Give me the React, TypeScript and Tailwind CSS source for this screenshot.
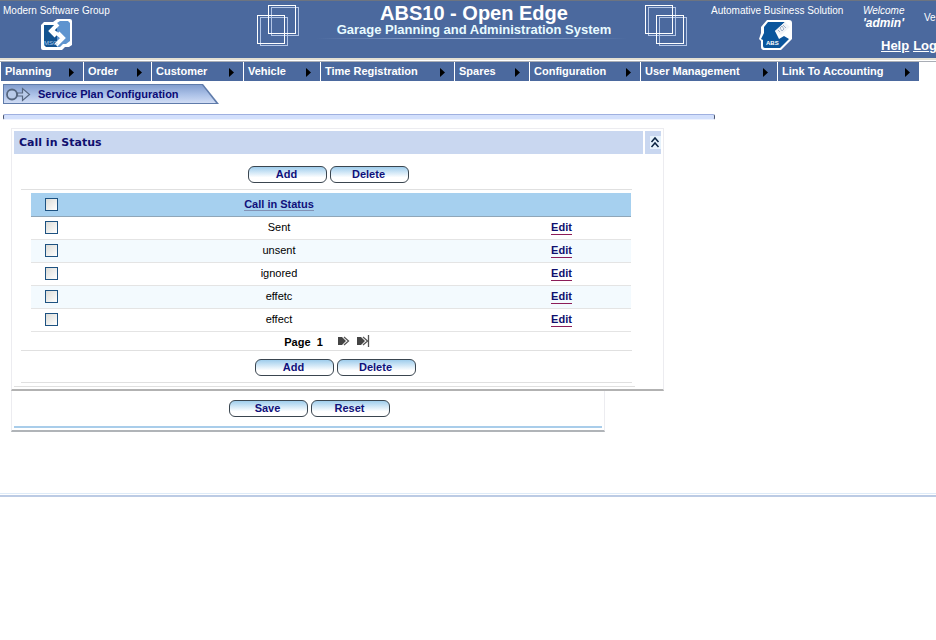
import { useState } from "react";

const menus = [
  { label: "Planning", width: "w-[83px]" },
  { label: "Order", width: "w-[68px]" },
  { label: "Customer", width: "w-[92px]" },
  { label: "Vehicle", width: "w-[77px]" },
  { label: "Time Registration", width: "w-[134px]" },
  { label: "Spares", width: "w-[75px]" },
  { label: "Configuration", width: "w-[111px]" },
  { label: "User Management", width: "w-[137px]" },
  { label: "Link To Accounting", width: "w-[142px]" },
];

const statuses = ["Sent", "unsent", "ignored", "effetc", "effect"];

function Squares({ upperX, lowerX }: { upperX: number; lowerX: number }) {
  return (
    <svg width="42" height="42" viewBox="0 0 42 42" fill="none" aria-hidden="true">
      <g stroke="#b4c6e6">
        <rect x={lowerX + 3} y="12.5" width="27" height="28" />
        <rect x={upperX + 3} y="2.5" width="27" height="28" />
      </g>
      <g stroke="#fff">
        <rect x={lowerX} y="10.5" width="27" height="28" />
        <rect x={upperX} y="0.5" width="27" height="28" />
      </g>
    </svg>
  );
}

function MsgLogo() {
  return (
    <svg width="32" height="32" viewBox="0 0 32 32" aria-label="MSG">
      <path d="M3 3h9l4-3h13q2 0 2 2v24l-3 2h-4l-3 3H2q-2 0-2-2V6z" fill="#fff" />
      <path d="M3 6h13v22H5l-2-2z" fill="#135390" />
      <path d="M16 28V4l3-2h8l2 2v18l-4 3h-3l-3 3z" fill="#5f94cf" />
      <path d="M17 5l-7 7 5 5M15 26l7-7-5-5" fill="none" stroke="#fff" strokeWidth="4" />
      <path d="M11 11l12 9" stroke="#fff" strokeWidth="3" />
      <text x="3" y="26" fontSize="6" fill="#a9cdf0" fontFamily="Liberation Sans, sans-serif">MSG</text>
    </svg>
  );
}

function AbsLogo() {
  return (
    <svg width="34" height="32" viewBox="0 0 34 32" aria-label="ABS">
      <path d="M8 0h22q3 0 3 3v16L22 30H5q-3 0-3-3v-6l-2-2 2-6V7z" fill="#fff" />
      <path d="M9 2h17L16 11l4 8 5-3 5 3-9 9H6q-2 0-2-2v-6l-2-1 3-6V7z" fill="#0b559c" />
      <path d="M16 11l10-9 5 5-9 8z" fill="#f1f3f7" />
      <path d="M19 10l2 2M21 8l2 3 2-2-2-3zM24 5l3 3" fill="none" stroke="#8fa2bd" strokeWidth=".8" />
      <text x="7" y="25" fontSize="6" fontWeight="bold" fill="#fff" fontFamily="Liberation Sans, sans-serif">ABS</text>
    </svg>
  );
}

function PillButton({ label }: { label: string }) {
  return (
    <button
      type="button"
      className="h-[17px] w-[79px] rounded-md border border-[#3a454f] bg-linear-to-b from-[#9fcdec] to-white to-70% pr-[2px] text-center text-[11px] leading-[15px] font-bold text-[#10107a]"
    >
      {label}
    </button>
  );
}

function Tick({ label }: { label: string }) {
  return (
    <input
      type="checkbox"
      aria-label={label}
      className="block size-[13px] appearance-none border border-[#1d5281] bg-linear-to-br from-[#dcdcd7] to-white checked:bg-[#1d5281]"
    />
  );
}

export default function App() {
  const [open, setOpen] = useState(true);
  return (
    <div className="min-h-screen overflow-x-hidden bg-white font-['Liberation_Sans',Arial,sans-serif] text-[11px] text-black">
      <header className="flex h-[58px] border-t border-[#6d7480] bg-[#4b699e] text-white">
        <div className="w-[257px] shrink-0 pt-1 pl-[3px] text-[10px] leading-3">
          <div>Modern Software Group</div>
          <div className="mt-[2px] ml-[38px]"><MsgLogo /></div>
        </div>
        <div className="shrink-0 pt-1"><Squares upperX={11.5} lowerX={0.5} /></div>
        <div className="w-[346px] shrink-0 pt-[2px] text-center font-bold">
          <h1 className="ml-1 text-[20px] leading-5">ABS10 - Open Edge</h1>
          <div className="ml-1 text-[13px] leading-[14px] text-[#e8fbff]">Garage Planning and Administration System</div>
          <div className="mx-auto mt-px h-px w-[310px] bg-linear-to-r from-[#4b699e] via-[#a5b9dd] to-[#4b699e]" />
        </div>
        <div className="shrink-0 pt-1"><Squares upperX={0.5} lowerX={11.5} /></div>
        <div className="w-[172px] shrink-0 pt-1 pl-6 text-[10px] leading-3">
          <div>Automative Business Solution</div>
          <div className="mt-[3px] ml-12"><AbsLogo /></div>
        </div>
        <div className="grow pt-[3px]">
          <div className="flex items-center whitespace-nowrap">
            <div className="w-[65px] shrink-0 pl-1 leading-[13px] italic">
              <div className="text-[10px]">Welcome</div>
              <div className="text-[12px] font-bold">'admin'</div>
            </div>
            <div className="text-[10px]">Ve</div>
          </div>
          <nav className="flex gap-1 pt-[9px] pl-[22px] text-[13px] leading-[14px] font-bold whitespace-nowrap underline">
            <a href="#help">Help</a>
            <a href="#log">Log</a>
          </nav>
        </div>
      </header>
      <div className="h-1 border-t-2 border-b border-t-[#e4e0d3] border-b-[#a9adb5]" />

      <nav className="flex h-[19px] text-[11px] leading-[19px] font-bold text-white">
        {menus.map((m) => (
          <a
            key={m.label}
            href="#menu"
            className={`flex shrink-0 items-center justify-between border-l border-white bg-[#4b699e] pr-2 pl-1 whitespace-nowrap ${m.width}`}
          >
            {m.label}
            <svg width="6" height="9" viewBox="0 0 6 9" className="mt-[2px]" aria-hidden="true"><path d="M0 0l5 4.500-5 4.500z" fill="#000" /></svg>
          </a>
        ))}
      </nav>

      <div className="mt-[3px] ml-[3px] h-5 w-[216px] bg-[#5f7baa] [clip-path:polygon(0_0,200px_0,100%_100%,0_100%)]">
        <div className="flex h-full items-center bg-linear-to-b from-[#7f9acb] via-[#a9bfe6] to-[#d5e0f6] pl-[3px] [clip-path:polygon(1px_1px,199px_1px,213px_19px,1px_19px)]">
          <svg width="26" height="15" viewBox="0 0 26 15" fill="#b9cbe9" stroke="#566780" aria-hidden="true">
            <circle cx="6" cy="7.500" r="5" strokeWidth="1.800" />
            <path d="M11.500 6h5V1.500l7 6-7 6V9h-5z" strokeWidth="1.200" />
          </svg>
          <h2 className="pt-px pl-[6px] text-[11px] font-bold text-[#0b0b75]">Service Plan Configuration</h2>
        </div>
      </div>

      <div className="mt-[10px] ml-[3px] h-[6px] w-[712px] rounded-xs border border-t-[#9fb0e0] border-r-[#4a5570] border-b-[#edf2ff] border-l-[#4a5570] bg-[#d3e0fc]" />

      <main className="mt-2 ml-[11px]">
        <section className="w-[653px] border border-b-2 border-[#ececf0] border-b-[#b2b2b2] p-[2px]">
          <div className="flex gap-[2px]">
            <h3 className="h-[23px] grow bg-[#c9d7f0] pl-[5px] font-['DejaVu_Sans',Verdana,sans-serif] text-[11px] leading-[23px] font-bold text-[#10106e]">
              Call in Status
            </h3>
            <button
              type="button"
              aria-label="Collapse"
              onClick={() => setOpen(!open)}
              className="flex w-4 items-center justify-end bg-[#c9d7f0]"
            >
              <svg width="11" height="13" viewBox="0 0 11 13" fill="none" aria-hidden="true">
                <path d="M0 0h11v13H0z" fill="#e6f2fc" />
                <path d="M1.500 6l3.500-4 3.500 4M1.500 11l3.500-4 3.500 4" stroke="#0b2442" strokeWidth="1.500" />
              </svg>
            </button>
          </div>
          {open && (
            <>
              <div className="mr-[29px] ml-[7px]">
                <div className="flex h-9 justify-center gap-[3px] border-b border-[#e0e0e0] pt-3 pl-1">
                  <PillButton label="Add" />
                  <PillButton label="Delete" />
                </div>
                <table className="mt-[3px] ml-[10px] w-[600px] table-fixed border-collapse text-center">
                  <thead>
                    <tr className="h-[23px] border-b border-[#8fa6b8] bg-[#a6d0ef]">
                      <th className="w-[42px] p-0 pl-[14px]"><Tick label="Select all" /></th>
                      <th className="w-[412px] p-0">
                        <a href="#sort" className="border-b border-[#8292b5] text-[#10107a]">Call in Status</a>
                      </th>
                      <th className="p-0" aria-label="Actions" />
                    </tr>
                  </thead>
                  <tbody>
                    {statuses.map((s) => (
                      <tr key={s} className="h-[23px] border-b border-[#e4e4e4] even:bg-[#f3fafe]">
                        <td className="p-0 pl-[14px]"><Tick label={s} /></td>
                        <td className="p-0">{s}</td>
                        <td className="p-0 pl-[7px]">
                          <a href="#edit" className="border-b border-[#8c1c58] pb-px font-bold text-[#10106e]">Edit</a>
                        </td>
                      </tr>
                    ))}
                  </tbody>
                </table>
                <div className="flex h-[19px] items-center justify-center border-b border-[#e0e0e0] pl-px font-bold">
                  <span className="pt-[3px] whitespace-pre">Page  1</span>
                  <a href="#next" aria-label="Next page" className="ml-[15px]">
                    <svg width="12" height="10" viewBox="0 0 12 10" aria-hidden="true">
                      <path d="M0 1h4l4 4-4 4H0z" fill="#444" />
                      <path d="M6 1l4.500 4L6 9" fill="none" stroke="#555" strokeWidth="1.300" />
                    </svg>
                  </a>
                  <a href="#last" aria-label="Last page" className="ml-[7px]">
                    <svg width="13" height="12" viewBox="0 0 13 12" aria-hidden="true">
                      <path d="M0 2h4l4 4-4 4H0z" fill="#444" />
                      <path d="M6 2l4.500 4L6 10M11.500 0v12" fill="none" stroke="#555" strokeWidth="1.300" />
                    </svg>
                  </a>
                </div>
                <div className="flex h-8 justify-center gap-[3px] border-b border-[#e0e0e0] pt-2 pl-[18px]">
                  <PillButton label="Add" />
                  <PillButton label="Delete" />
                </div>
              </div>
              <div className="mt-[3px] mr-[26px] h-px bg-[#e0e0e0]" />
            </>
          )}
        </section>
        <section className="w-[594px] border-x border-b-2 border-[#ececf0] border-b-[#b0b4b8] px-[2px] pb-[2px]">
          <div className="flex h-[37px] justify-center gap-[3px] border-b-2 border-[#a9cdea] pt-[9px] pl-[3px]">
            <PillButton label="Save" />
            <PillButton label="Reset" />
          </div>
        </section>
      </main>

      <footer className="mt-[61px] h-1 border-t border-b-2 border-t-[#deebf8] border-b-[#bccbe4]" />
    </div>
  );
}
